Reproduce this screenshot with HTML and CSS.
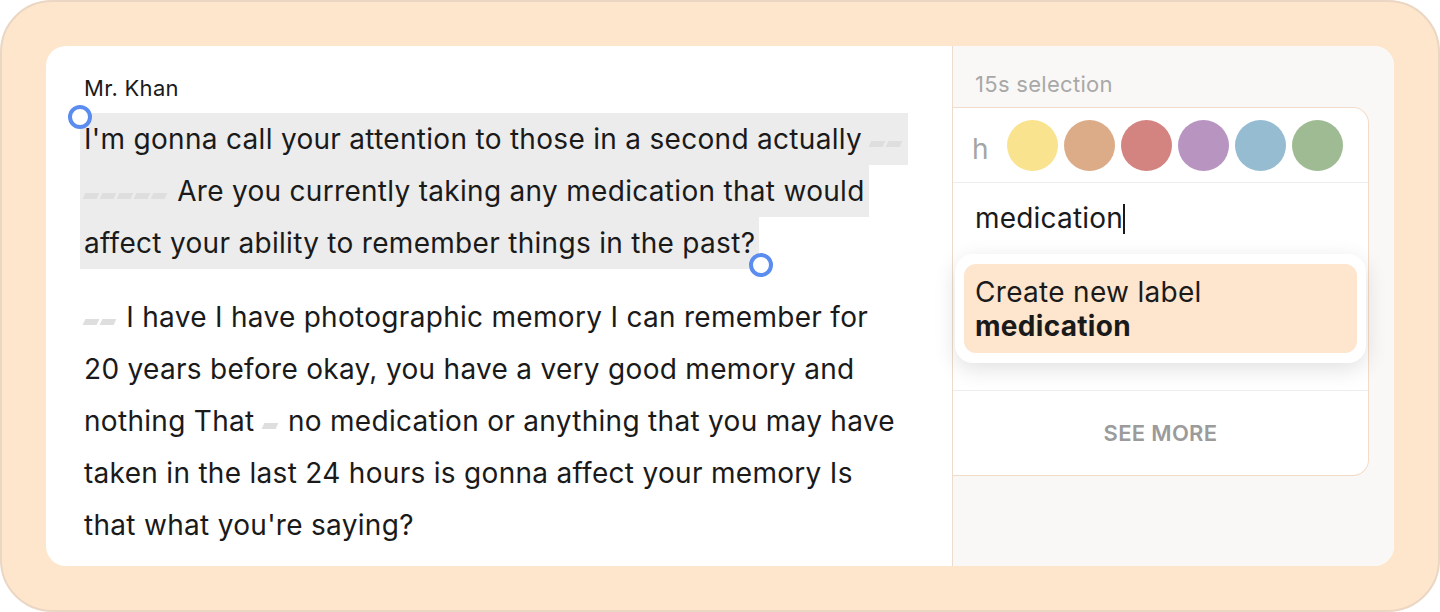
FILE: index.html
```html
<!DOCTYPE html>
<html lang="en">
<head>
    <meta charset="UTF-8">
    <title>Transcript labels</title>
    <link rel="stylesheet" href="styles.css">
</head>
<body>
    <div class="frame">
        <div class="card">
            <div class="transcript">
                <div class="speaker">Mr. Khan</div>
                <p class="para first">
                    <span class="handle start"></span>
                    <span class="selected">I'm gonna call your attention to those in a second actually <span class="gap"></span><span class="gap"></span><span class="gap"></span><span class="gap"></span><span class="gap"></span><span class="gap"></span><span class="gap"></span> Are you currently taking any medication that would affect your ability to remember things in the past?<span class="anchor"><span class="handle end"></span></span></span>
                </p>
                <p class="para second">
                    <span class="gap"></span><span class="gap"></span> I have I have photographic memory I can remember for 20 years before okay, you have a very good memory and nothing That <span class="gap"></span> no medication or anything that you may have taken in the last 24 hours is gonna affect your memory Is that what you're saying?
                </p>
            </div>
            <div class="side">
                <div class="side-title">15s selection</div>
                <div class="picker">
                    <div class="colors">
                        <span class="shortcut">h</span>
                        <span class="swatch yellow"></span>
                        <span class="swatch tan"></span>
                        <span class="swatch red"></span>
                        <span class="swatch purple"></span>
                        <span class="swatch blue"></span>
                        <span class="swatch green"></span>
                    </div>
                    <div class="search">
                        <div class="input">medication<span class="caret"></span></div>
                        <div class="dropdown">
                            <div class="option">
                                Create new label<br>
                                <strong>medication</strong>
                            </div>
                        </div>
                    </div>
                    <div class="more">SEE MORE</div>
                </div>
            </div>
        </div>
    </div>
</body>
</html>
```

FILE: styles.css
```css
* {
    box-sizing: border-box;
}

body {
    margin: 0;
    font-family: 'Inter', 'Noto Sans', sans-serif;
    color: #1a1a1a;
    background: #fff;
}

.frame {
    width: 1440px;
    height: 612px;
    padding: 44px;
    background: #fee6cd;
    border: 2px solid #ead6c3;
    border-radius: 52px;
}

.card {
    display: flex;
    height: 520px;
    background: #fff;
    border-radius: 20px;
    overflow: hidden;
}

/* transcript column */

.transcript {
    width: 906px;
    padding: 29px 0 0 34px;
}

.speaker {
    font-size: 22px;
    line-height: 26px;
    letter-spacing: 0.3px;
    padding-left: 4px;
    margin-bottom: 12px;
}

.para {
    position: relative;
    margin: 0 0 22px;
    font-size: 28px;
    line-height: 52px;
    letter-spacing: 0.3px;
    padding-left: 4px;
}

.para.first {
    padding-left: 0;
    width: 828px;
}

.para.second {
    width: 822px;
}

.selected {
    background: #ececec;
    padding: 9px 4px;
    -webkit-box-decoration-break: clone;
    box-decoration-break: clone;
}

.gap {
    display: inline-block;
    width: 14px;
    height: 6px;
    margin-right: 3px;
    background: #dedede;
    transform: skewX(-25deg);
    vertical-align: 2px;
}

.anchor {
    position: relative;
    display: inline-block;
    width: 0;
    height: 0;
}

.handle {
    position: absolute;
    width: 24px;
    height: 24px;
    border: 4px solid #5b8cf0;
    border-radius: 50%;
    background: #fff;
    z-index: 2;
}

.handle.start {
    left: -12px;
    top: -8px;
}

.handle.end {
    left: -6px;
    top: 0;
}

/* label side panel */

.side {
    flex: 1;
    background: #faf8f6;
    border-left: 1px solid #ecdccd;
    padding: 25px 25px 0 0;
}

.side-title {
    padding-left: 22px;
    font-size: 22px;
    line-height: 26px;
    letter-spacing: 0.3px;
    color: #a8a8a8;
    margin-bottom: 10px;
}

.picker {
    background: #fff;
    border: 1px solid #f3dcc7;
    border-left: none;
    border-radius: 0 16px 16px 0;
}

.colors {
    display: flex;
    align-items: center;
    gap: 6px;
    height: 75px;
    padding-left: 19px;
    border-bottom: 1px solid #ededed;
}

.shortcut {
    font-size: 28px;
    color: #a5a5a5;
    margin-right: 12px;
    padding-top: 8px;
}

.swatch {
    width: 51px;
    height: 51px;
    border-radius: 50%;
}

.yellow { background: #f9e38f; }
.tan { background: #dcac89; }
.red { background: #d38480; }
.purple { background: #b894c1; }
.blue { background: #95bcd1; }
.green { background: #9fbb93; }

.search {
    position: relative;
    height: 208px;
    border-bottom: 1px solid #ededed;
}

.input {
    padding: 17px 0 0 22px;
    font-size: 28px;
    line-height: 36px;
    letter-spacing: 0.2px;
}

.caret {
    display: inline-block;
    width: 2px;
    height: 30px;
    background: #1a1a1a;
    vertical-align: -6px;
}

.dropdown {
    position: absolute;
    top: 71px;
    left: 2px;
    right: 2px;
    padding: 10px 9px;
    background: #fff;
    border-radius: 18px;
    box-shadow: 0 6px 22px rgba(0, 0, 0, 0.12);
}

.option {
    background: #fee5cd;
    border-radius: 12px;
    padding: 11px 11px 10px;
    font-size: 28px;
    line-height: 34px;
    letter-spacing: 0.3px;
}

.option strong {
    font-weight: 700;
}

.more {
    height: 84px;
    display: flex;
    align-items: center;
    justify-content: center;
    font-size: 22px;
    font-weight: 600;
    color: #9b9b9b;
    letter-spacing: 0.3px;
}
```
